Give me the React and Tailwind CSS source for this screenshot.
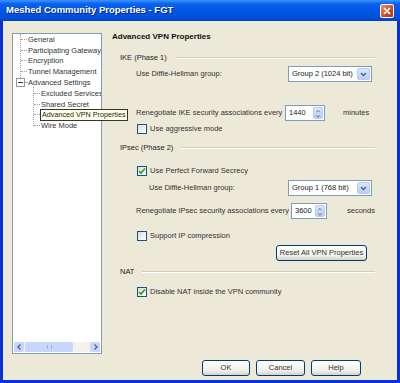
import React from 'react';

const font = { fontFamily: '"Liberation Sans", Arial, sans-serif' };

const CheckBox = ({ checked }) => (
  <span className="flex h-[10px] w-[10px] shrink-0 items-center justify-center border border-[#1C5180] bg-[linear-gradient(135deg,#DCDCD7,#FFFFFF)]">
    {checked && (
      <svg width="8" height="8" viewBox="0 0 8 8">
        <path d="M1 4 L3 6 L7 1.5" fill="none" stroke="#21A121" strokeWidth="1.6" />
      </svg>
    )}
  </span>
);

const Select = ({ value }) => (
  <div className="flex h-[16px] w-[84px] shrink-0 items-center border border-[#7F9DB9] bg-white">
    <span className="flex-1 pl-[3px] text-[7.5px] whitespace-nowrap text-[#222]">{value}</span>
    <span className="mr-[1px] flex h-[12px] w-[13px] items-center justify-center rounded-[2px] border border-[#B9CBF4] bg-[linear-gradient(180deg,#DCE7FE,#B7CCF9)]">
      <svg width="7" height="5" viewBox="0 0 7 5">
        <path d="M1 1 L3.5 3.5 L6 1" fill="none" stroke="#4D6185" strokeWidth="1.4" />
      </svg>
    </span>
  </div>
);

const Spin = ({ value, width }) => (
  <div className={`flex h-[16px] shrink-0 items-center border border-[#7F9DB9] bg-white ${width}`}>
    <span className="flex-1 pl-[3px] text-[7.5px] text-[#222]">{value}</span>
    <span className="mr-[1px] flex h-[12px] w-[10px] flex-col rounded-[2px] border border-[#B9CBF4] bg-[linear-gradient(180deg,#DCE7FE,#B7CCF9)]">
      <svg width="8" height="5" viewBox="0 0 8 5" className="mt-[1px]">
        <path d="M2 3.5 L4 1.5 L6 3.5" fill="none" stroke="#4D6185" strokeWidth="1" />
      </svg>
      <svg width="8" height="5" viewBox="0 0 8 5">
        <path d="M2 1.5 L4 3.5 L6 1.5" fill="none" stroke="#4D6185" strokeWidth="1" />
      </svg>
    </span>
  </div>
);

const XpButton = ({ children, className = '' }) => (
  <div
    className={`flex h-[16px] items-center justify-center rounded-[3px] border border-[#003C74] bg-[linear-gradient(180deg,#FFFFFF,#F0F0EA_70%,#D6D0C5)] text-[7.5px] whitespace-nowrap text-[#333] ${className}`}
  >
    {children}
  </div>
);

const GroupTitle = ({ label, className = '' }) => (
  <div className={`flex h-[10px] items-center pl-[18px] pr-[22px] ${className}`}>
    <span className="text-[7.5px] whitespace-nowrap text-[#222]">{label}</span>
    <span className="ml-[8px] h-[2px] flex-1 border-t border-b border-t-[#D0D0BF] border-b-white" />
  </div>
);

const Label = ({ children, className = '' }) => (
  <span className={`shrink-0 text-[7.5px] whitespace-nowrap text-[#333] ${className}`}>{children}</span>
);

const treeItems = [
  { label: 'General', level: 0 },
  { label: 'Participating Gateways', level: 0 },
  { label: 'Encryption', level: 0 },
  { label: 'Tunnel Management', level: 0 },
  { label: 'Advanced Settings', level: 0, expander: true },
  { label: 'Excluded Services', level: 1 },
  { label: 'Shared Secret', level: 1 },
  { label: 'Advanced VPN Properties', level: 1 },
  { label: 'Wire Mode', level: 1 },
];

function Tree() {
  return (
    <div className="mt-[12px] ml-[9px] flex h-[321px] w-[90px] shrink-0 flex-col border border-[#7F9DB9] bg-white">
      <div className="relative flex-1 overflow-hidden">
        <span className="absolute top-0 left-[7px] h-[46px] border-l border-dotted border-[#A0A0A0]" />
        <span className="absolute top-[53px] left-[20px] h-[39px] border-l border-dotted border-[#A0A0A0]" />
        {treeItems.map((item) => (
          <div key={item.label} className="relative flex h-[10.8px] items-center whitespace-nowrap">
            {item.level === 0 ? (
              item.expander ? (
                <>
                  <span className="ml-[3px] flex h-[9px] w-[9px] shrink-0 items-center justify-center border border-[#919B9C] bg-white">
                    <span className="h-px w-[5px] bg-[#333]" />
                  </span>
                  <span className="w-[2px] shrink-0 border-t border-dotted border-[#A0A0A0]" />
                </>
              ) : (
                <span className="ml-[8px] w-[6px] shrink-0 border-t border-dotted border-[#A0A0A0]" />
              )
            ) : (
              <span className="ml-[21px] w-[6px] shrink-0 border-t border-dotted border-[#A0A0A0]" />
            )}
            <span
              className={`ml-[1px] shrink-0 text-[7.5px] ${
                item.label === 'Advanced VPN Properties' ? 'text-transparent' : 'text-[#333]'
              }`}
            >
              {item.label}
            </span>
          </div>
        ))}
      </div>
      <div className="mx-[1px] mb-[1px] flex h-[10px] items-center bg-[#F3F1EC]">
        <span className="flex h-[10px] w-[10px] items-center justify-center rounded-[2px] bg-[#C7D6FA]">
          <svg width="5" height="6" viewBox="0 0 5 6">
            <path d="M3.5 0.5 L1 3 L3.5 5.5" fill="none" stroke="#4D6185" strokeWidth="1.3" />
          </svg>
        </span>
        <span className="ml-[1px] flex h-[10px] w-[48px] items-center justify-center rounded-[2px] bg-[#C7D6FA]">
          <span className="h-[4px] w-[5px] border-x border-[#9DB3E3]" />
        </span>
        <span className="flex-1" />
        <span className="flex h-[10px] w-[10px] items-center justify-center rounded-[2px] bg-[#C7D6FA]">
          <svg width="5" height="6" viewBox="0 0 5 6">
            <path d="M1.5 0.5 L4 3 L1.5 5.5" fill="none" stroke="#4D6185" strokeWidth="1.3" />
          </svg>
        </span>
      </div>
    </div>
  );
}

export default function App() {
  return (
    <div className="flex h-[383px] w-[400px] flex-col bg-[#0831D9]" style={font}>
      <div className="flex h-[21px] items-center bg-[linear-gradient(180deg,#3D95FF_0%,#0A62EC_18%,#0055E3_55%,#0050DC_85%,#0041C4_100%)] px-[6px]">
        <span className="flex-1 text-[9.5px] font-bold text-white [text-shadow:1px_1px_0_#0A1E84]">
          Meshed Community Properties - FGT
        </span>
        <span className="flex h-[14px] w-[14px] items-center justify-center rounded-[2px] border border-white bg-[linear-gradient(135deg,#F0906E,#D2461F_60%,#B8340F)]">
          <svg width="8" height="8" viewBox="0 0 8 8">
            <path d="M1 1 L7 7 M7 1 L1 7" stroke="white" strokeWidth="1.7" />
          </svg>
        </span>
      </div>

      <div className="relative mx-[3px] mb-[3px] flex flex-1 flex-col bg-[#ECE9D8]">
        <div className="flex">
          <Tree />
          <div className="flex flex-1 flex-col">
            <div className="mt-[11px] flex h-[10px] items-center pl-[10px]">
              <span className="text-[8px] font-bold text-[#111]">Advanced VPN Properties</span>
            </div>

            <GroupTitle label="IKE (Phase 1)" className="mt-[11px]" />
            <div className="mt-[3px] flex h-[16px] items-center pl-[34px]">
              <Label className="w-[152px]">Use Diffie-Hellman group:</Label>
              <Select value="Group 2 (1024 bit)" />
            </div>
            <div className="mt-[23px] flex h-[16px] items-center pl-[34px]">
              <Label className="w-[149px]">Renegotiate IKE security associations every</Label>
              <Spin value="1440" width="w-[40px]" />
              <Label className="ml-[18px]">minutes</Label>
            </div>
            <div className="mt-[3px] flex h-[10px] items-center gap-[3px] pl-[35px]">
              <CheckBox />
              <Label>Use aggressive mode</Label>
            </div>

            <GroupTitle label="IPsec (Phase 2)" className="mt-[9px]" />
            <div className="mt-[13px] flex h-[10px] items-center gap-[3px] pl-[35px]">
              <CheckBox checked />
              <Label>Use Perfect Forward Secrecy</Label>
            </div>
            <div className="mt-[4px] flex h-[16px] items-center pl-[47px]">
              <Label className="w-[139px]">Use Diffie-Hellman group:</Label>
              <Select value="Group 1 (768 bit)" />
            </div>
            <div className="mt-[7px] flex h-[16px] items-center pl-[34px]">
              <Label className="w-[155px]">Renegotiate IPsec security associations every</Label>
              <Spin value="3600" width="w-[36px]" />
              <Label className="ml-[20px]">seconds</Label>
            </div>
            <div className="mt-[12px] flex h-[10px] items-center gap-[3px] pl-[35px]">
              <CheckBox />
              <Label>Support IP compression</Label>
            </div>
            <div className="mt-[4px] flex pl-[174px]">
              <XpButton className="w-[91px]">Reset All VPN Properties</XpButton>
            </div>

            <GroupTitle label="NAT" className="mt-[6px]" />
            <div className="mt-[10px] flex h-[10px] items-center gap-[3px] pl-[35px]">
              <CheckBox checked />
              <Label>Disable NAT inside the VPN community</Label>
            </div>
          </div>
        </div>

        <div className="mt-[6px] flex gap-[6px] pl-[199px]">
          <XpButton className="w-[48px]">OK</XpButton>
          <XpButton className="w-[49px]">Cancel</XpButton>
          <XpButton className="w-[50px]">Help</XpButton>
        </div>

        <div className="absolute top-[88px] left-[37px] flex h-[12px] items-center border border-[#333] bg-[#FFFFE8] px-[1px]">
          <span className="text-[7.2px] whitespace-nowrap text-[#222]">Advanced VPN Properties</span>
        </div>
      </div>
    </div>
  );
}
